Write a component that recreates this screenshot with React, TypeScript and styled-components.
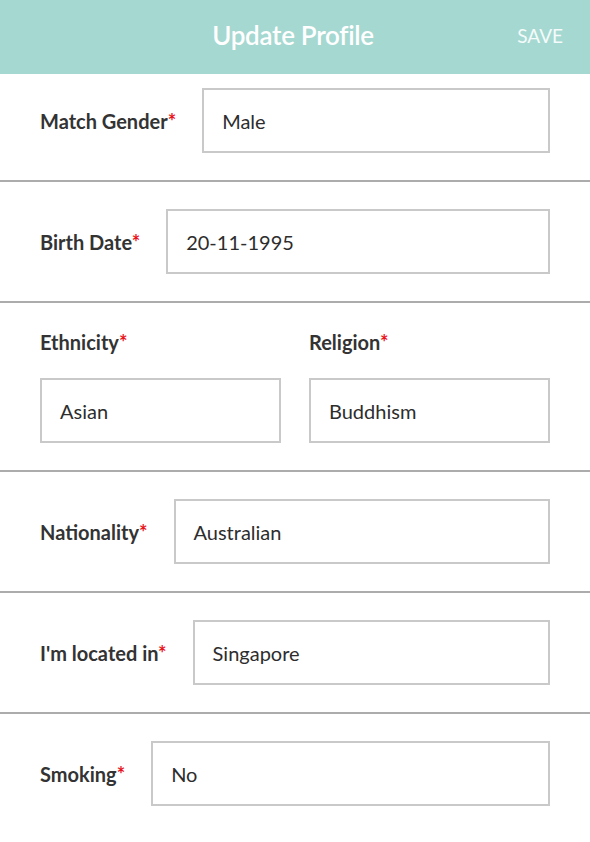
import React from "react";
import styled, { createGlobalStyle } from "styled-components";

const Global = createGlobalStyle`
  html, body { margin: 0; padding: 0; background: #ffffff; }
  body { font-family: Lato, "Liberation Sans", sans-serif; }
  * { box-sizing: border-box; }
`;

const Page = styled.div`
  width: 590px;
  min-height: 842px;
  background: #fff;
`;

const Header = styled.header`
  height: 74px;
  background: #a5d8d1;
  display: grid;
  grid-template-columns: 1fr auto 1fr;
  align-items: center;
  padding: 0 27px 4px 27px;
`;

const Title = styled.h1`
  grid-column: 2;
  margin: 0 0 0 -4px;
  color: #fff;
  font-size: 26px;
  font-weight: 600;
  letter-spacing: -0.3px;
`;

const SaveButton = styled.button`
  grid-column: 3;
  justify-self: end;
  background: none;
  border: none;
  padding: 0;
  color: #f4fbfa;
  font-family: inherit;
  font-size: 19px;
  font-weight: 400;
`;

const Row = styled.section<{ $first?: boolean }>`
  display: flex;
  align-items: center;
  gap: 26px;
  padding: ${(p) => (p.$first ? "14px" : "27px")} 40px 27px 40px;
  border-bottom: 2px solid #acacac;
  &:last-child {
    border-bottom: none;
  }
`;

const SplitRow = styled.section`
  display: grid;
  grid-template-columns: 1fr 1fr;
  column-gap: 28px;
  padding: 27px 40px 27px 40px;
  border-bottom: 2px solid #acacac;
`;

const Column = styled.div`
  display: flex;
  flex-direction: column;
  gap: 24px;
`;

const Label = styled.label`
  color: #333;
  font-size: 20px;
  font-weight: 700;
  white-space: nowrap;
  line-height: 24px;
`;

const Star = styled.span`
  color: #e8141c;
`;

const Field = styled.div`
  flex: 1 0 auto;
  height: 65px;
  border: 2px solid #c9c9c9;
  display: flex;
  align-items: center;
  padding-left: 18px;
  color: #2d2d2d;
  font-size: 20px;
  font-weight: 400;
`;

const Req = ({ children }: { children: React.ReactNode }) => (
  <Label>
    {children}
    <Star>*</Star>
  </Label>
);

export default function App() {
  return (
    <Page>
      <Global />
      <Header>
        <Title>Update Profile</Title>
        <SaveButton>SAVE</SaveButton>
      </Header>
      <Row $first>
        <Req>Match Gender</Req>
        <Field>Male</Field>
      </Row>
      <Row>
        <Req>Birth Date</Req>
        <Field>20-11-1995</Field>
      </Row>
      <SplitRow>
        <Column>
          <Req>Ethnicity</Req>
          <Field>Asian</Field>
        </Column>
        <Column>
          <Req>Religion</Req>
          <Field>Buddhism</Field>
        </Column>
      </SplitRow>
      <Row>
        <Req>Nationality</Req>
        <Field>Australian</Field>
      </Row>
      <Row>
        <Req>I'm located in</Req>
        <Field>Singapore</Field>
      </Row>
      <Row>
        <Req>Smoking</Req>
        <Field>No</Field>
      </Row>
    </Page>
  );
}
